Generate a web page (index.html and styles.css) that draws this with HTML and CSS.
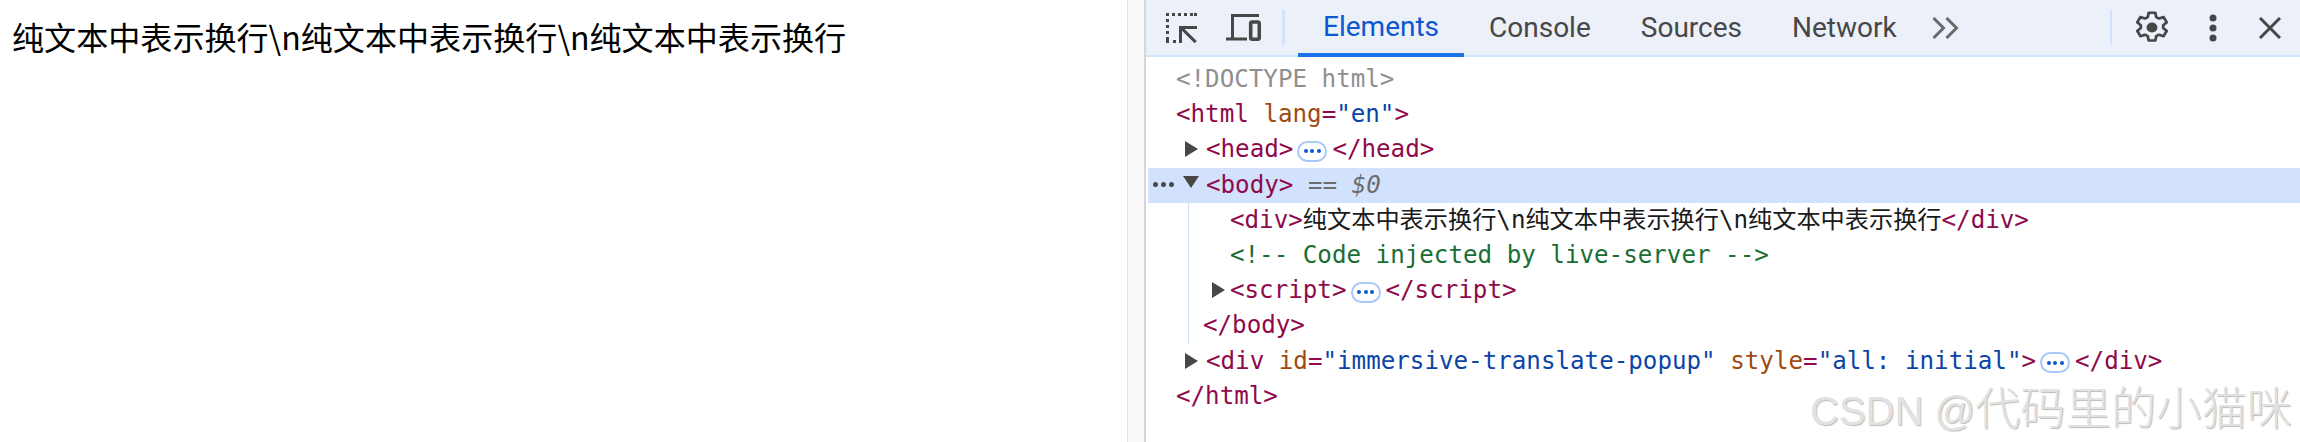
FILE: index.html
```html
<!DOCTYPE html>
<html lang="zh">
<head>
<meta charset="utf-8">
<title>DevTools</title>
<link rel="stylesheet" href="styles.css">
</head>
<body>
<main class="page"><div>纯文本中表示换行\n纯文本中表示换行\n纯文本中表示换行</div></main>
<div class="splitter"></div>
<section class="devtools">
  <header class="toolbar">
    <svg class="icon inspect" width="31" height="30" viewBox="0 0 31 30"><path d="M0 0h3v3H0zM6 0h3v3H6zM12 0h3v3h-3zM18 0h3v3h-3zM24 0h3v3h-3zM28 0h3v3h-3zM0 6h3v3H0zM0 12h3v3H0zM0 18h3v3H0zM0 24h3v3H0zM0 27h3v3H0zM7 27h3v3H7z" fill="#474747"/><path d="M13 13h18v3H18.500L30.800 28l-2.200 2.200L16 17.800V30h-3z" fill="#474747"/></svg>
    <svg class="icon device" width="35" height="27" viewBox="0 0 35 27"><path d="M33 1.500H6.500V24M0 25h21" fill="none" stroke="#474747" stroke-width="3"/><rect x="24.700" y="8" width="8.600" height="17.200" rx="1.500" fill="none" stroke="#474747" stroke-width="3.600"/></svg>
    <span class="sep"></span>
    <nav class="tabs">
      <a class="tab active">Elements</a>
      <a class="tab">Console</a>
      <a class="tab">Sources</a>
      <a class="tab">Network</a>
    </nav>
    <svg class="icon more" width="27" height="22" viewBox="0 0 27 22"><path d="M1.500 1L11.500 11 1.500 21M14.500 1L24.500 11 14.500 21" fill="none" stroke="#6a6a6a" stroke-width="3"/></svg>
    <span class="sep end"></span>
    <svg class="icon gear" width="32" height="33" viewBox="0 0 34 38" preserveAspectRatio="none"><path d="M13.500 2h7l1 5 3 1.700 4.800-1.700 3.400 6-3.800 3.300v3.400l3.800 3.300-3.400 6-4.800-1.700-3 1.700-1 5h-7l-1-5-3-1.700-4.800 1.700-3.400-6 3.800-3.300v-3.400L1.300 13l3.400-6 4.800 1.700 3-1.700z" fill="none" stroke="#474747" stroke-width="3" stroke-linejoin="round"/><circle cx="17" cy="19" r="5.800" fill="#474747"/></svg>
    <svg class="icon dots" width="8" height="28" viewBox="0 0 8 28"><circle cx="4" cy="4" r="3.500" fill="#474747"/><circle cx="4" cy="14" r="3.500" fill="#474747"/><circle cx="4" cy="24" r="3.500" fill="#474747"/></svg>
    <svg class="icon close" width="22" height="22" viewBox="0 0 22 22"><path d="M1 1l20 20M21 1L1 21" fill="none" stroke="#474747" stroke-width="3"/></svg>
  </header>
  <div class="tree">
    <div class="row l0 doctype">&lt;!DOCTYPE html&gt;</div>
    <div class="row l0"><span class="t">&lt;html</span> <span class="a">lang</span><span class="t">=</span><span class="v">"en"</span><span class="t">&gt;</span></div>
    <div class="row l1"><i class="arrow"></i><span class="t">&lt;head&gt;</span><span class="pill"><b></b><b></b><b></b></span><span class="t">&lt;/head&gt;</span></div>
    <div class="row l1 selected"><span class="gutter"><b></b><b></b><b></b></span><i class="arrow down"></i><span class="t">&lt;body&gt;</span> <span class="eq">==</span> <em>$0</em></div>
    <div class="nest">
      <div class="row l2"><span class="t">&lt;div&gt;</span><span class="x">纯文本中表示换行\n纯文本中表示换行\n纯文本中表示换行</span><span class="t">&lt;/div&gt;</span></div>
      <div class="row l2 comment">&lt;!-- Code injected by live-server --&gt;</div>
      <div class="row l2"><i class="arrow"></i><span class="t">&lt;script&gt;</span><span class="pill"><b></b><b></b><b></b></span><span class="t">&lt;/script&gt;</span></div>
      <div class="row l3"><span class="t">&lt;/body&gt;</span></div>
    </div>
    <div class="row l1"><i class="arrow"></i><span class="t">&lt;div</span> <span class="a">id</span><span class="t">=</span><span class="v">"immersive-translate-popup"</span> <span class="a">style</span><span class="t">=</span><span class="v">"all: initial"</span><span class="t">&gt;</span><span class="pill"><b></b><b></b><b></b></span><span class="t">&lt;/div&gt;</span></div>
    <div class="row l0"><span class="t">&lt;/html&gt;</span></div>
  </div>
</section>
<div class="watermark">CSDN @<span class="wm-cjk">代码里的小猫咪</span></div>
</body>
</html>
```
FILE: styles.css
```css
html, body { margin: 0; padding: 0; }
body {
  width: 2300px;
  height: 442px;
  overflow: hidden;
  display: flex;
  background: #fff;
  position: relative;
}
.page {
  width: 1127px;
  flex: none;
  box-sizing: border-box;
  padding: 13px 0 0 12px;
  font: 32.100px/46px "Noto Sans CJK SC", "Liberation Sans", sans-serif;
  color: #000;
}
.splitter {
  width: 19px;
  flex: none;
  box-sizing: border-box;
  background: #f9f9f9;
  border-left: 1px solid #e4e4e4;
  border-right: 2px solid #d6d6d6;
}
.devtools {
  flex: 1;
  min-width: 0;
  display: flex;
  flex-direction: column;
}
.toolbar {
  height: 57px;
  flex: none;
  box-sizing: border-box;
  display: flex;
  align-items: center;
  padding-right: 19px;
  background: #ebf0f9;
  border-bottom: 2px solid #d3e3fd;
}
.icon { flex: none; display: block; }
.inspect { margin-left: 20px; }
.device { margin-left: 29px; }
.sep {
  flex: none;
  width: 3px;
  height: 35px;
  background: #d3e3fd;
  margin-left: 21px;
}
.tabs {
  display: flex;
  margin-left: 13px;
  align-self: flex-start;
}
.tab {
  display: flex;
  align-items: center;
  padding: 0 25px;
  font: 28px "Roboto", "Liberation Sans", sans-serif;
  color: #474747;
  height: 55px;
  box-sizing: border-box;
}
.tab.active {
  color: #0b57d0;
  height: 57px;
  border-bottom: 4px solid #1a73e8;
}
.more { margin-left: 10px; }
.sep.end { margin-left: auto; width: 2px; }
.gear { margin-left: 24px; }
.dots { margin-left: 41px; }
.close { margin-left: 42px; }
.tree {
  flex: 1;
  font: 24.200px/35.200px "DejaVu Sans Mono", "Noto Sans CJK SC", monospace;
  padding-top: 5px;
}
.row {
  height: 35.200px;
  white-space: pre;
  position: relative;
  box-sizing: border-box;
}
.l0 { padding-left: 30px; }
.l1 { padding-left: 60px; }
.l2 { padding-left: 84px; }
.l3 { padding-left: 57px; }
.nest { position: relative; }
.nest::before {
  content: "";
  position: absolute;
  left: 42px;
  top: 0;
  bottom: 0;
  width: 1px;
  background: #cfe0fb;
}
.doctype { color: #8f8f8f; }
.comment { color: #1b6e33; }
.t { color: #8e0a4b; }
.a { color: #a04a10; }
.v { color: #0b45a5; }
.x { color: #1a1a1a; }
.eq { color: #6c6c6c; }
em { color: #6c6c6c; font-style: italic; }
.selected {
  background: #d2e2fc;
  margin-left: 2px;
  padding-left: 58px;
}
.arrow {
  position: absolute;
  left: 39px;
  top: 9px;
  width: 0;
  height: 0;
  border-left: 13px solid #474747;
  border-top: 8px solid transparent;
  border-bottom: 8px solid transparent;
}
.l2 .arrow { left: 66px; }
.arrow.down {
  left: 35px;
  top: 8px;
  border-top: 12px solid #474747;
  border-bottom: 0;
  border-left: 8px solid transparent;
  border-right: 8px solid transparent;
}
.pill {
  display: inline-flex;
  vertical-align: 4px;
  box-sizing: border-box;
  width: 30px;
  height: 21px;
  margin: 0 5px 0 4px;
  border: 2px solid #a8c7fa;
  border-radius: 11px;
  background: #fff;
  align-items: center;
  justify-content: center;
  gap: 2.500px;
}
.pill b {
  width: 4px;
  height: 4px;
  border-radius: 50%;
  background: #0b57d0;
}
.gutter {
  position: absolute;
  left: 5px;
  top: 14px;
  display: flex;
  gap: 3px;
}
.gutter b {
  width: 5px;
  height: 5px;
  border-radius: 50%;
  background: #474747;
}
.watermark {
  position: absolute;
  left: 1810px;
  top: 380px;
  font: 40px/50px "Liberation Sans", sans-serif;
  color: #e2e2e2;
  text-shadow: 1px 1px 1px #bcbcbc;
  white-space: nowrap;
}
.wm-cjk {
  font: 45.300px/50px "Noto Sans CJK SC", sans-serif;
  font-weight: 300;
}
```
